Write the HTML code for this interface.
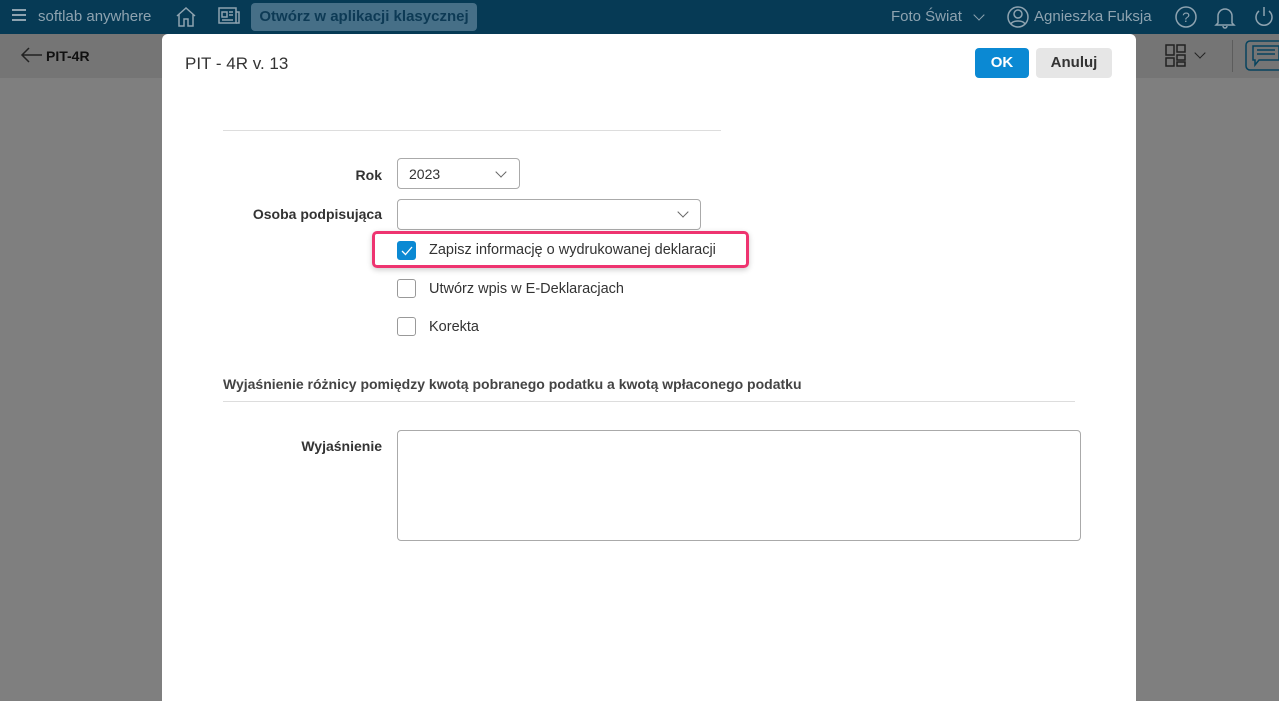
<!DOCTYPE html>
<html><head><meta charset="utf-8"><style>
*{box-sizing:border-box;margin:0;padding:0}
body{width:1279px;height:701px;overflow:hidden;background:#7f7f7f;font-family:"Liberation Sans",Arial,sans-serif;position:relative;color:#333}
.top{position:absolute;left:0;top:0;width:1279px;height:34px;background:#063a55;color:#8ea3b0;font-size:15px}
.top span{position:absolute;top:8px}
.sub{position:absolute;left:0;top:34px;width:1279px;height:44px;background:#757575}
.modal{position:absolute;left:162px;top:34px;width:974px;height:667px;background:#fff;border-radius:6px 6px 0 0}
.lbl{position:absolute;font-size:14px;font-weight:bold;color:#333;text-align:right}
.sel{position:absolute;border:1px solid #aaa;border-radius:4px;background:#fff;font-size:14px;color:#333;padding:7px 11px}
.cb{position:absolute;width:19px;height:19px;border:1px solid #999;border-radius:3px;background:#fff}
.ct{position:absolute;font-size:14.5px;color:#333}
.chev{position:absolute;width:8px;height:8px;border-right:1px solid #666;border-bottom:1px solid #666;transform:rotate(45deg)}
</style></head><body>
<div class="top">
<span style="left:12px;top:9px;width:14px;height:2px;background:#8ea3b0;box-shadow:0 5px #8ea3b0,0 10px #8ea3b0"></span>
<span style="left:38px">softlab anywhere</span>
<svg style="position:absolute;left:175px;top:5px" width="22" height="24" viewBox="0 0 22 24" fill="none" stroke="#8ea3b0" stroke-width="1.5"><path d="M2 11 L11 3 L20 11 M4 9 V21 H9 V14 H13 V21 H18 V9"/></svg>
<svg style="position:absolute;left:218px;top:7px" width="22" height="18" viewBox="0 0 22 18" fill="none" stroke="#8ea3b0" stroke-width="1.5"><rect x="1" y="1" width="17" height="15"/><path d="M18 5h3v11h-3M4 5h5v5H4zM11 5h4M11 8h4M4 13h11"/></svg>
<div style="position:absolute;left:251px;top:3px;width:226px;height:28px;background:#466f87;border-radius:4px;color:#0d3a55;font-weight:bold;font-size:15px;text-align:center;line-height:28px">Otwórz w aplikacji klasycznej</div>
<span style="left:891px">Foto Świat</span>
<div class="chev" style="left:975px;top:11px;border-color:#8ea3b0"></div>
<svg style="position:absolute;left:1007px;top:6px" width="22" height="22" viewBox="0 0 22 22" fill="none" stroke="#8ea3b0" stroke-width="1.5"><circle cx="11" cy="11" r="10"/><circle cx="11" cy="8" r="4"/><path d="M4 18c2-4 12-4 14 0"/></svg>
<span style="left:1034px">Agnieszka Fuksja</span>
<svg style="position:absolute;left:1175px;top:6px" width="22" height="22" viewBox="0 0 22 22" fill="none" stroke="#8ea3b0" stroke-width="1.5"><circle cx="11" cy="11" r="10"/><text x="11" y="16" font-size="14" fill="#8ea3b0" stroke="none" text-anchor="middle" font-family="Liberation Sans">?</text></svg>
<svg style="position:absolute;left:1214px;top:5px" width="22" height="24" viewBox="0 0 22 24" fill="none" stroke="#8ea3b0" stroke-width="1.5"><path d="M4 18V11a7 7 0 0 1 14 0v7l2 2H2zM9 21a2 2 0 0 0 4 0"/></svg>
<svg style="position:absolute;left:1253px;top:5px" width="22" height="24" viewBox="0 0 22 24" fill="none" stroke="#8ea3b0" stroke-width="1.5"><path d="M11 2v9M6 6a8 8 0 1 0 10 0"/></svg>
</div>
<div class="sub">
<svg style="position:absolute;left:20px;top:13px" width="24" height="16" viewBox="0 0 24 16" fill="none" stroke="#222" stroke-width="1.5"><path d="M9 1 L2 8 L9 15 M2 8 H22"/></svg>
<span style="position:absolute;left:46px;top:14px;font-weight:bold;font-size:14px;color:#111">PIT-4R</span>
<svg style="position:absolute;left:1165px;top:10px" width="22" height="24" viewBox="0 0 22 24" fill="none" stroke="#222" stroke-width="1.5"><rect x="1" y="1" width="8" height="10"/><rect x="12" y="1" width="8" height="7"/><rect x="1" y="14" width="8" height="8"/><rect x="12" y="11" width="8" height="5"/><rect x="12" y="18" width="8" height="4"/></svg>
<div class="chev" style="left:1196px;top:15px;border-color:#222"></div>
<div style="position:absolute;left:1232px;top:6px;width:1px;height:32px;background:#5c5c5c"></div>
<svg style="position:absolute;left:1245px;top:6px" width="34" height="32" viewBox="0 0 34 32" fill="none" stroke="#06435e" stroke-width="1.5"><rect x="1" y="1" width="40" height="29" rx="4"/><path d="M8 6h26v14H14l-4 5v-5H8z M12 10h18M12 14h18"/></svg>
</div>
<div class="modal">
<div style="position:absolute;left:23px;top:20px;font-size:17px;color:#333">PIT - 4R v. 13</div>
<div style="position:absolute;left:813px;top:14px;width:54px;height:30px;background:#0b89d3;border-radius:4px;color:#fff;font-weight:bold;font-size:15px;text-align:center;line-height:30px">OK</div>
<div style="position:absolute;left:874px;top:14px;width:76px;height:30px;background:#e6e6e6;border-radius:4px;color:#333;font-weight:bold;font-size:15px;text-align:center;line-height:30px">Anuluj</div>
<div style="position:absolute;left:61px;top:96px;width:498px;height:1px;background:#ddd"></div>
<div class="lbl" style="left:100px;width:120px;top:133px">Rok</div>
<div class="sel" style="left:235px;top:124px;width:123px;height:31px">2023</div>
<div class="chev" style="left:335px;top:134px"></div>
<div class="lbl" style="left:60px;width:160px;top:172px">Osoba podpisująca</div>
<div class="sel" style="left:235px;top:165px;width:304px;height:31px"></div>
<div class="chev" style="left:517px;top:174px"></div>
<div style="position:absolute;left:210px;top:197px;width:377px;height:37px;border:3px solid #ee3470;border-radius:5px;box-shadow:0 2px 6px rgba(0,0,0,.2)"></div>
<div class="cb" style="left:235px;top:207px;background:#0b89d3;border-color:#0b89d3"></div>
<svg style="position:absolute;left:238px;top:210px" width="14" height="14" viewBox="0 0 14 14" fill="none" stroke="#fff" stroke-width="1.3"><path d="M2 7l3.5 3.5L12 3"/></svg>
<div class="ct" style="left:267px;top:208px">Zapisz informację o wydrukowanej deklaracji</div>
<div class="cb" style="left:235px;top:245px"></div>
<div class="ct" style="left:267px;top:247px">Utwórz wpis w E-Deklaracjach</div>
<div class="cb" style="left:235px;top:283px"></div>
<div class="ct" style="left:267px;top:285px">Korekta</div>
<div style="position:absolute;left:61px;top:342px;font-size:14px;font-weight:bold;color:#444">Wyjaśnienie różnicy pomiędzy kwotą pobranego podatku a kwotą wpłaconego podatku</div>
<div style="position:absolute;left:61px;top:367px;width:852px;height:1px;background:#ddd"></div>
<div class="lbl" style="left:60px;width:160px;top:404px">Wyjaśnienie</div>
<div class="sel" style="left:235px;top:396px;width:684px;height:111px"></div>
</div>
</body></html>
